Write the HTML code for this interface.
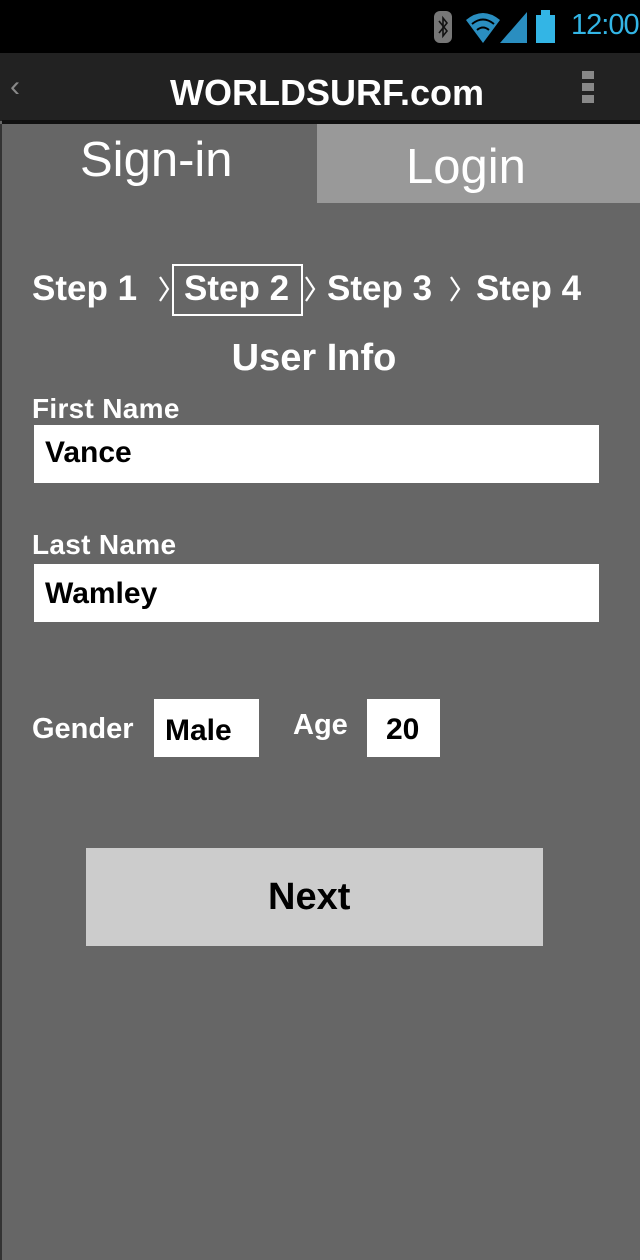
<!DOCTYPE html>
<html><head><style>
body{margin:0;width:640px;height:1260px;background:#666;position:relative;overflow:hidden;font-family:"Liberation Sans",sans-serif;color:#fff}
.a{position:absolute}
.s{position:absolute;top:269px;font-size:35px;font-weight:bold;letter-spacing:0px}
.c{position:absolute;top:276px}
</style></head><body>
<div class="a" style="left:0;top:0;width:640px;height:53px;background:#000"></div>
<div class="a" style="left:434px;top:11px;width:18px;height:32px;background:#777;border-radius:6px"></div>
<svg class="a" style="left:434px;top:11px" width="18" height="32"><path d="M5 10 L13 20 L9 25 L9 7 L13 12 L5 22" stroke="#111" stroke-width="1.6" fill="none"/></svg>
<svg class="a" style="left:466px;top:10px" width="64" height="34"><path d="M0 10 Q17 -4 34 10 L17 33 Z" fill="#2a8ec0"/><path d="M6 14 Q17 5 28 14" stroke="#000" stroke-width="2" fill="none"/><path d="M11 20 Q17 15 23 20" stroke="#000" stroke-width="2" fill="none"/><path d="M34 33 L61 2 L61 33 Z" fill="#2a8ec0"/></svg>
<div class="a" style="left:536px;top:15px;width:19px;height:28px;background:#33b5e5"></div>
<div class="a" style="left:541px;top:10px;width:9px;height:5px;background:#33b5e5"></div>
<div class="a" style="left:571px;top:9px;font-size:29px;color:#33b5e5;letter-spacing:-1px">12:00</div>
<div class="a" style="left:0;top:53px;width:640px;height:68px;background:#222"></div>
<div class="a" style="left:2px;top:120px;width:638px;height:4px;background:#111"></div>
<div class="a" style="left:10px;top:70px;font-size:30px;color:#888">‹</div>
<div class="a" style="left:0;width:654px;top:72px;text-align:center;font-size:36px;font-weight:bold">WORLDSURF.com</div>
<div class="a" style="left:582px;top:71px;width:12px;height:8px;background:#888"></div>
<div class="a" style="left:582px;top:83px;width:12px;height:8px;background:#888"></div>
<div class="a" style="left:582px;top:95px;width:12px;height:8px;background:#888"></div>
<div class="a" style="left:0;top:124px;width:2px;height:1136px;background:#333"></div>
<div class="a" style="left:317px;top:124px;width:323px;height:79px;background:#999"></div>
<div class="a" style="left:80px;top:132px;font-size:49px">Sign-in</div>
<div class="a" style="left:406px;top:139px;font-size:49px">Login</div>
<div class="s" style="left:32px">Step 1</div>
<svg class="c" style="left:158px" width="12" height="26"><path d="M2 1 L10 13 L2 25" stroke="#fff" stroke-width="2.2" fill="none"/></svg>
<div class="a" style="left:172px;top:264px;width:127px;height:48px;border:2px solid #fff"></div>
<div class="s" style="left:184px">Step 2</div>
<svg class="c" style="left:304px" width="12" height="26"><path d="M2 1 L10 13 L2 25" stroke="#fff" stroke-width="2.2" fill="none"/></svg>
<div class="s" style="left:327px">Step 3</div>
<svg class="c" style="left:449px" width="12" height="26"><path d="M2 1 L10 13 L2 25" stroke="#fff" stroke-width="2.2" fill="none"/></svg>
<div class="s" style="left:476px">Step 4</div>
<div class="a" style="left:0;width:628px;top:337px;text-align:center;font-size:38px;font-weight:bold">User Info</div>
<div class="a" style="left:32px;top:393px;font-size:28px;font-weight:bold;letter-spacing:0.3px">First Name</div>
<div class="a" style="left:34px;top:425px;width:565px;height:58px;background:#fff"></div>
<div class="a" style="left:45px;top:436px;font-size:30px;font-weight:bold;color:#000">Vance</div>
<div class="a" style="left:32px;top:529px;font-size:28px;font-weight:bold;letter-spacing:0.3px">Last Name</div>
<div class="a" style="left:34px;top:564px;width:565px;height:58px;background:#fff"></div>
<div class="a" style="left:45px;top:577px;font-size:30px;font-weight:bold;color:#000">Wamley</div>
<div class="a" style="left:32px;top:713px;font-size:29px;font-weight:bold">Gender</div>
<div class="a" style="left:154px;top:699px;width:105px;height:58px;background:#fff"></div>
<div class="a" style="left:165px;top:714px;font-size:30px;font-weight:bold;color:#000">Male</div>
<div class="a" style="left:293px;top:709px;font-size:29px;font-weight:bold">Age</div>
<div class="a" style="left:367px;top:699px;width:73px;height:58px;background:#fff"></div>
<div class="a" style="left:386px;top:713px;font-size:30px;font-weight:bold;color:#000">20</div>
<div class="a" style="left:86px;top:848px;width:457px;height:98px;background:#ccc"></div>
<div class="a" style="left:268px;top:876px;font-size:38px;font-weight:bold;color:#000">Next</div>
</body></html>
